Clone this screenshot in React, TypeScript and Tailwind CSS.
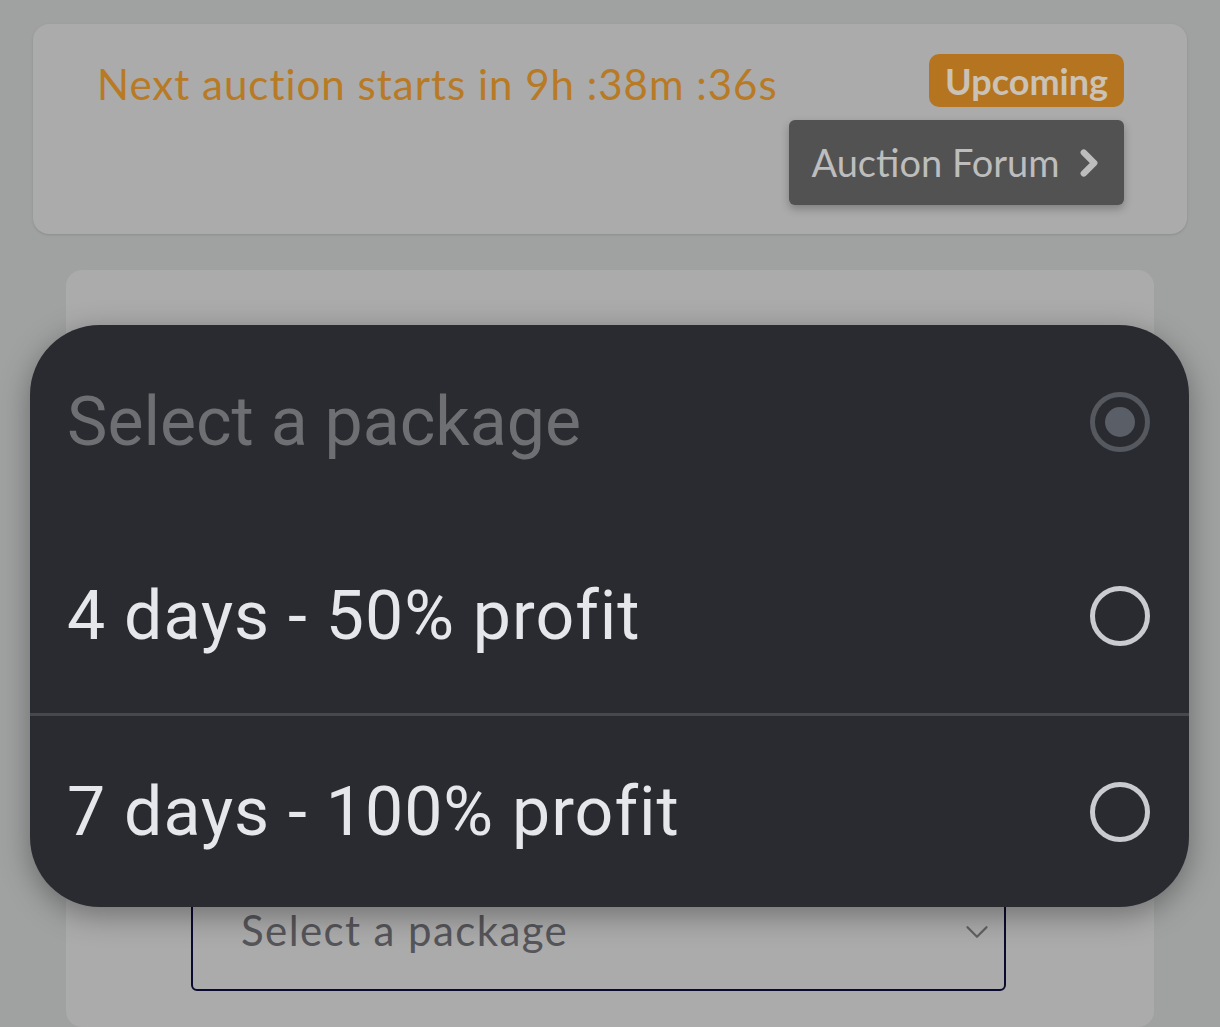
import { ChevronRight, ChevronDown } from "lucide-react";

const options = ["4 days - 50% profit", "7 days - 100% profit"];

function Radio({ checked, muted }: { checked?: boolean; muted?: boolean }) {
  const color = muted ? "#55585f" : "#c9cbd1";
  return (
    <svg width="62" height="62" viewBox="0 0 62 62">
      <circle cx="31" cy="31" r="27.5" fill="none" stroke={color} strokeWidth="5" />
      {checked && <circle cx="31" cy="31" r="15" fill="#5a5e66" />}
    </svg>
  );
}

export default function App() {
  return (
    <div
      className="relative flex h-[1027px] w-full flex-col overflow-hidden bg-[#a0a2a1] px-[33px] pt-6"
      style={{ fontFamily: "Lato, 'Open Sans', sans-serif" }}
    >
      {/* Auction status card */}
      <div className="flex h-[210px] shrink-0 justify-between rounded-2xl bg-[#ababab] pl-16 pr-[63px] pt-[30px] shadow-sm">
        <p className="mt-[4px] text-[42px] leading-[52px] tracking-[1px] text-[#b87a24]">
          Next auction starts in 9h :38m :36s
        </p>
        <div className="flex flex-col items-end gap-[13px]">
          <span className="flex h-[53px] items-center rounded-[10px] bg-[#b57520] px-4 text-[36px] font-bold text-[#cac2b6]">
            Upcoming
          </span>
          <button className="flex h-[85px] w-[335px] items-center justify-center gap-2 rounded-md bg-[#525252] text-[38px] text-[#bdbdbd] shadow-[0_4px_8px_rgba(0,0,0,0.25)]">
            Auction Forum
            <ChevronRight size={42} strokeWidth={3.6} className="-mr-2" />
          </button>
        </div>
      </div>

      {/* Package card */}
      <div className="mx-[33px] mt-9 flex-1 rounded-2xl bg-[#ababab] pl-[125px] pr-[148px] pt-[600px]">
        <div className="flex h-[121px] items-start justify-between rounded-md border-2 border-[#0a0a30] pl-12 pr-2 pt-[33px]">
          <span className="text-[42px] leading-[50px] tracking-[1.4px] text-[#55555a]">Select a package</span>
          <ChevronDown size={38} strokeWidth={1.4} className="mt-[8px] text-[#606060]" />
        </div>
      </div>

      {/* Open select menu */}
      <div
        className="absolute left-[30px] top-[325px] flex w-[1159px] flex-col overflow-hidden rounded-[70px] bg-[#2a2b30] shadow-[0_8px_30px_rgba(0,0,0,0.35)]"
        style={{ fontFamily: "Roboto, 'Noto Sans', sans-serif" }}
      >
        <div className="flex h-[194px] items-center justify-between pl-[37px] pr-[38px]">
          <span className="text-[68px] text-[#6e6f73]">Select a package</span>
          <Radio checked muted />
        </div>
        {options.map((o, i) => (
          <div
            key={o}
            className={`flex h-[194px] items-center justify-between pl-[37px] pr-[38px] ${
              i > 0 ? "border-t-[3px] border-[#47484d]" : ""
            }`}
          >
            <span className="text-[68px] tracking-[1px] text-[#e6e7eb]">{o}</span>
            <Radio />
          </div>
        ))}
      </div>
    </div>
  );
}
